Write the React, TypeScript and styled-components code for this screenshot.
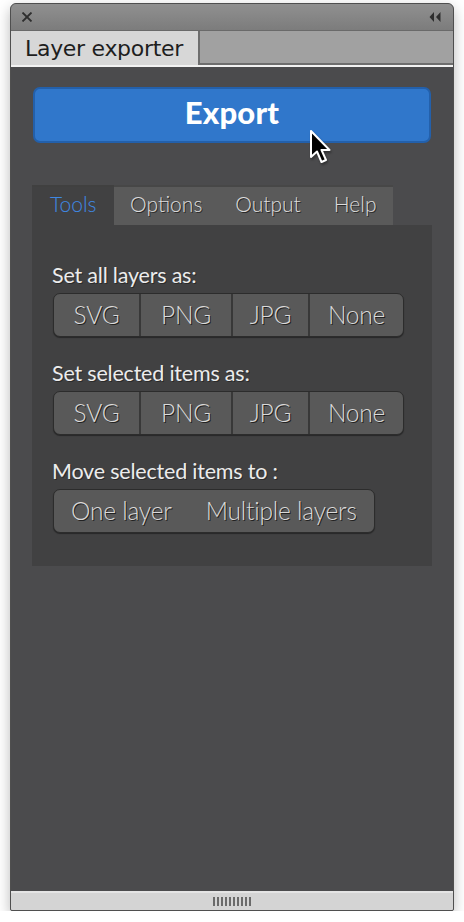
import React from "react";
import styled, {createGlobalStyle} from "styled-components";

//region Styled
const GlobalStyle = createGlobalStyle`
    html, body {
        margin: 0;
        padding: 0;
        background: #fff;
    }
`;

const Page = styled.div`
    padding: 3px 10px 0 10px;
`;

const Window = styled.div`
    position: relative;
    width: 444px;
    height: 908px;
    box-sizing: border-box;
    border: 1px solid #4f4f4f;
    border-radius: 6px 6px 2px 2px;
    overflow: hidden;
    display: flex;
    flex-direction: column;
    box-shadow: 0 5px 14px rgba(0, 0, 0, 0.28);
    background: #4b4b4d;
`;

const TitleBar = styled.div`
    height: 26px;
    flex: none;
    display: flex;
    align-items: center;
    justify-content: space-between;
    padding: 0 12px 0 10px;
    background: linear-gradient(#909090, #7c7c7c);
    border-bottom: 1px solid #6a6a6a;
`;

const TabStrip = styled.div`
    height: 34px;
    flex: none;
    display: flex;
    background: #a1a1a1;
    border-bottom: 2px solid #f2f2f2;
`;

const PanelTab = styled.div`
    width: 187px;
    display: flex;
    align-items: center;
    padding-left: 14px;
    box-sizing: border-box;
    background: #d7d7d7;
    color: #1e1e1e;
    font-family: "DejaVu Sans", sans-serif;
    font-size: 22px;
    letter-spacing: -0.3px;
`;

const TabFiller = styled.div`
    flex: 1;
    border-left: 2px solid #6e6e6e;
    border-bottom: 2px solid #6e6e6e;
`;

const Content = styled.div`
    position: relative;
    flex: 1;
    padding: 20px 22px 0 22px;
    background: #4b4b4d;
    display: flex;
    flex-direction: column;
`;

const ExportButton = styled.button`
    height: 56px;
    width: 100%;
    border: 2px solid #2360ab;
    border-radius: 7px;
    background: #3077cb;
    color: #fff;
    font-family: Lato, sans-serif;
    font-weight: 900;
    font-size: 31px;
    letter-spacing: 0.2px;
    padding: 0 0 7px 0;
`;

const Panel = styled.div`
    margin: 42px -1px 0 -1px;
    display: flex;
    flex-direction: column;
`;

const Tabs = styled.div`
    display: flex;
    height: 40px;
`;

const Tab = styled.div<{active?: boolean}>`
    display: flex;
    align-items: center;
    justify-content: center;
    padding: 0 ${props => props.active ? "17px" : "16.5px"} 5px ${props => props.active ? "18px" : "16.5px"};
    box-sizing: border-box;
    border-top: 2px solid ${props => props.active ? "#404040" : "#474747"};
    background: ${props => props.active ? "#414142" : "#5a5a5a"};
    color: ${props => props.active ? "#3f88e2" : "#dcdcdc"};
    font-family: Lato, sans-serif;
    font-weight: 300;
    font-size: 21px;
    text-shadow: ${props => props.active ? "none" : "1px 1px 0 #2a2a2a"};
`;

const PanelBody = styled.div`
    background: #414142;
    padding: 39px 20px 33px 20px;
    display: flex;
    flex-direction: column;
    gap: 25px;
`;

const Section = styled.div`
    display: flex;
    flex-direction: column;
    align-items: flex-start;
    gap: 5px;
`;

const Label = styled.div`
    height: 24px;
    line-height: 22px;
    color: #ececec;
    font-family: Lato, sans-serif;
    font-weight: 400;
    font-size: 21.5px;
    letter-spacing: -0.2px;
    text-shadow: 1px 1px 0 #2a2a2a;
`;

const ButtonGroup = styled.div`
    display: flex;
    height: 44px;
    margin-left: 1px;
    box-sizing: border-box;
    border: 1px solid #2c2c2c;
    border-radius: 7px;
    background: #595959;
    overflow: hidden;
    box-shadow: 0 1px 1px rgba(0, 0, 0, 0.4);
`;

const Segment = styled.div<{width?: number, divided?: boolean}>`
    width: ${props => props.width ? props.width + "px" : "auto"};
    padding: ${props => props.width ? "0 0 2px 0" : "0 17px 2px 17px"};
    display: flex;
    align-items: center;
    justify-content: center;
    box-sizing: border-box;
    border-left: ${props => props.divided ? "2px solid #383838" : "none"};
    color: #dadada;
    font-family: Lato, sans-serif;
    font-weight: 300;
    font-size: 24.5px;
    letter-spacing: -0.2px;
    text-shadow: 1px 1px 0 #222;
`;

const Footer = styled.div`
    height: 17px;
    flex: none;
    display: flex;
    align-items: center;
    justify-content: center;
    background: #d4d4d4;
    border-top: 2px solid #e4e4e4;
`;

const Cursor = styled.svg`
    position: absolute;
    left: 298px;
    top: 62px;
`;
//endregion

const formats = ["SVG", "PNG", "JPG", "None"];
const widths = [85, 92, 77, 95];

const FormatGroup = () => (
    <ButtonGroup>
        {formats.map((f, i) => (
            <Segment key={f} width={widths[i]} divided={i > 0}>{f}</Segment>
        ))}
    </ButtonGroup>
);

const App = () => {
    return (
        <Page>
            <GlobalStyle/>
            <Window>
                <TitleBar>
                    <svg width="12" height="10" viewBox="0 0 12 10">
                        <path d="M1.5 0.5 L10.5 9.5 M10.5 0.5 L1.5 9.5" stroke="#2e2e2e" strokeWidth="1.8"/>
                    </svg>
                    <svg width="12" height="10" viewBox="0 0 12 10">
                        <path d="M5 0 L0.5 5 L5 10 Z M11.5 0 L7 5 L11.5 10 Z" fill="#2e2e2e"/>
                    </svg>
                </TitleBar>
                <TabStrip>
                    <PanelTab>Layer exporter</PanelTab>
                    <TabFiller/>
                </TabStrip>
                <Content>
                    <ExportButton>Export</ExportButton>
                    <Panel>
                        <Tabs>
                            <Tab active>Tools</Tab>
                            <Tab>Options</Tab>
                            <Tab>Output</Tab>
                            <Tab>Help</Tab>
                        </Tabs>
                        <PanelBody>
                            <Section>
                                <Label>Set all layers as:</Label>
                                <FormatGroup/>
                            </Section>
                            <Section>
                                <Label>Set selected items as:</Label>
                                <FormatGroup/>
                            </Section>
                            <Section>
                                <Label>Move selected items to :</Label>
                                <ButtonGroup>
                                    <Segment>One layer</Segment>
                                    <Segment>Multiple layers</Segment>
                                </ButtonGroup>
                            </Section>
                        </PanelBody>
                    </Panel>
                    <Cursor width="26" height="38" viewBox="0 0 26 38">
                        <path d="M2 2 L2 28 L8 22.5 L12.5 33 L17 31 L12.5 21 L20.5 21 Z"
                              fill="#000" stroke="#fff" strokeWidth="2" strokeLinejoin="round"
                              style={{filter: "drop-shadow(1px 2px 1px rgba(0,0,0,0.35))"}}/>
                    </Cursor>
                </Content>
                <Footer>
                    <svg width="39" height="9" viewBox="0 0 39 9">
                        {Array.from({length: 10}).map((_, i) => (
                            <rect key={i} x={i * 4} y="0" width="2" height="9" fill="#6a6a6a"/>
                        ))}
                    </svg>
                </Footer>
            </Window>
        </Page>
    );
};

export default App;
